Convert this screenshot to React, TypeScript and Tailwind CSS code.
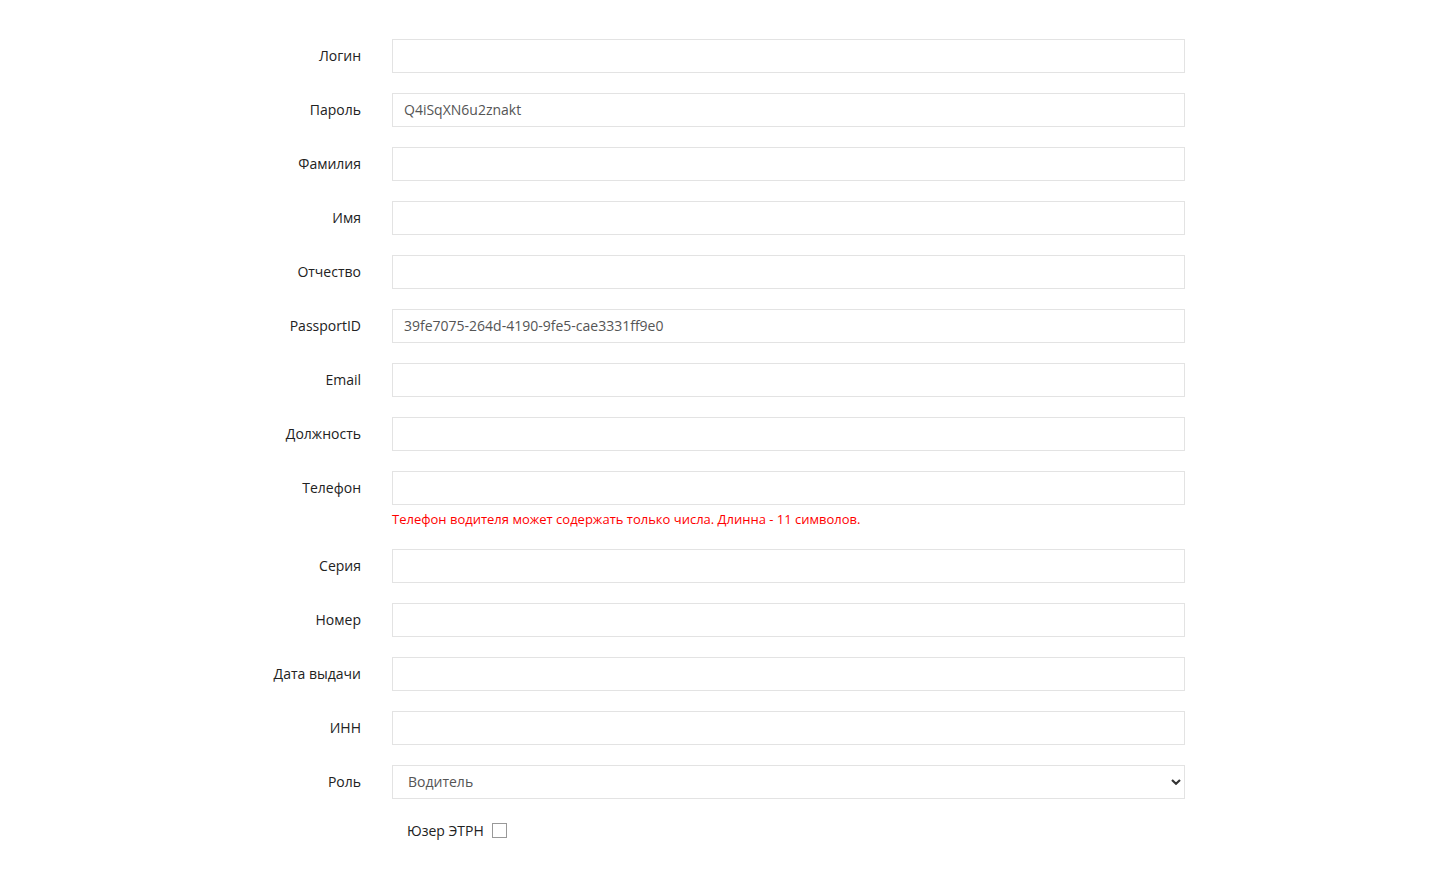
import { useState } from "react";

const fields: { label: string; value?: string }[] = [
  { label: "Логин" },
  { label: "Пароль", value: "Q4iSqXN6u2znakt" },
  { label: "Фамилия" },
  { label: "Имя" },
  { label: "Отчество" },
  { label: "PassportID", value: "39fe7075-264d-4190-9fe5-cae3331ff9e0" },
  { label: "Email" },
  { label: "Должность" },
  { label: "Телефон" },
  { label: "Серия" },
  { label: "Номер" },
  { label: "Дата выдачи" },
  { label: "ИНН" },
];

const inputCls =
  "h-[34px] w-full border border-[#e3e3e3] bg-white px-[11px] pb-[2px] text-[14px] text-[#555] outline-none";

function Row({ label, children }: { label: string; children: React.ReactNode }) {
  return (
    <div className="flex items-start">
      <label className="flex h-[34px] w-[130px] shrink-0 items-center justify-end pb-[2px] text-[14px] text-[#222]">
        {label}
      </label>
      <div className="ml-[31px] w-[793px]">{children}</div>
    </div>
  );
}

export default function App() {
  const [values, setValues] = useState<Record<string, string>>(() =>
    Object.fromEntries(fields.map((f) => [f.label, f.value ?? ""])),
  );
  const [etrn, setEtrn] = useState(false);

  return (
    <div
      className="min-h-screen bg-white pt-[39px] pl-[231px]"
      style={{ fontFamily: '"Open Sans", "Noto Sans", sans-serif' }}
    >
      <div className="flex flex-col gap-[20px]">
        {fields.map((f) => (
          <Row key={f.label} label={f.label}>
            <input
              className={inputCls}
              value={values[f.label]}
              onChange={(e) => setValues({ ...values, [f.label]: e.target.value })}
            />
            {f.label === "Телефон" && (
              <p className="mt-[5px] mb-[1px] text-[13px] leading-[18px] text-[#ff0000]">
                Телефон водителя может содержать только числа. Длинна - 11 символов.
              </p>
            )}
          </Row>
        ))}
        <Row label="Роль">
          <div className="relative">
            <select className={inputCls + " appearance-none pl-[15px]"} defaultValue="driver">
              <option value="driver">Водитель</option>
              <option value="admin">Администратор</option>
            </select>
            <svg
              className="pointer-events-none absolute right-[4px] top-1/2 -translate-y-1/2"
              width="10"
              height="7"
              viewBox="0 0 10 7"
            >
              <path d="M1 1.5 L5 5.2 L9 1.5" fill="none" stroke="#333" strokeWidth="2.2" />
            </svg>
          </div>
        </Row>
      </div>
      <div className="ml-[176px] mt-[21px] flex items-center">
        <span className="text-[14px] text-[#222]">Юзер ЭТРН</span>
        <button
          type="button"
          onClick={() => setEtrn(!etrn)}
          className="ml-[8px] h-[15px] w-[15px] border border-[#999] bg-white"
        />
      </div>
    </div>
  );
}
